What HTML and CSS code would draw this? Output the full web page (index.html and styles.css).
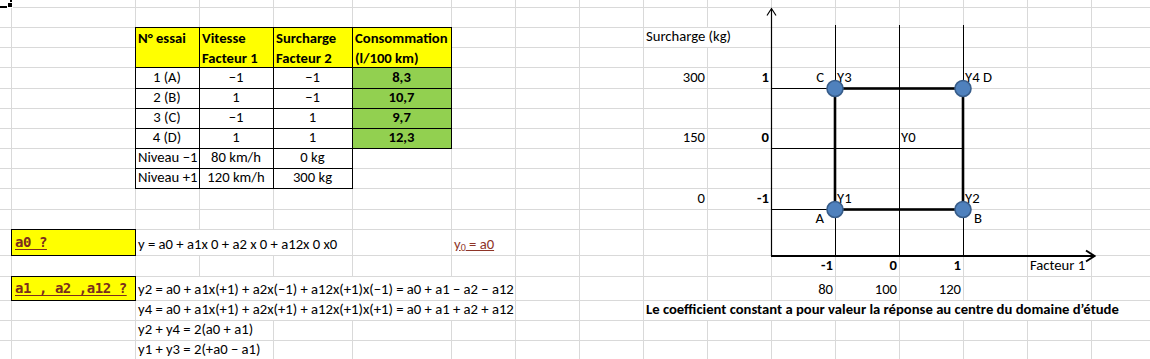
FILE: index.html
```html
<!DOCTYPE html>
<html lang="fr">
<head>
<meta charset="utf-8">
<title>Plan factoriel 2²</title>
<link rel="stylesheet" href="styles.css">
</head>
<body>
<div class="sheet">
  <div class="layer vlines">
    <span></span><span></span><span></span><span></span><span></span><span></span><span></span><span></span><span></span><span></span><span></span><span></span><span></span><span></span><span></span><span></span><span></span>
  </div>
  <div class="layer hlines">
    <span></span><span></span><span></span><span></span><span></span><span></span><span></span><span></span><span></span><span></span><span></span><span></span><span></span><span></span><span></span><span></span><span></span><span></span>
  </div>

  <div class="layer cells">
    <div class="cell cA r1 sel"><span class="handle"></span></div>

    <div class="cell cC r3 h2 bx yel hd">N° essai<br>&nbsp;</div>
    <div class="cell cD r3 h2 bx yel hd">Vitesse<br>Facteur 1</div>
    <div class="cell cE r3 h2 bx yel hd">Surcharge<br>Facteur 2</div>
    <div class="cell cF r3 h2 bx yel hd">Consommation<br>(l/100 km)</div>
    <div class="cell cJ r3 w2 ov">Surcharge (kg)</div>

    <div class="cell cC r5 bx ctr">1 (A)</div>
    <div class="cell cD r5 bx ctr">−1</div>
    <div class="cell cE r5 bx ctr">−1</div>
    <div class="cell cF r5 bx grn ctr">8,3</div>
    <div class="cell cJ r5 rt">300</div>
    <div class="cell cK r5 rt b">1</div>
    <div class="cell cL r5 rt pr12">C</div>
    <div class="cell cM r5 pl0">Y3</div>
    <div class="cell cO r5 pl0">Y4 D</div>

    <div class="cell cC r6 bx ctr">2 (B)</div>
    <div class="cell cD r6 bx ctr">1</div>
    <div class="cell cE r6 bx ctr">−1</div>
    <div class="cell cF r6 bx grn ctr">10,7</div>

    <div class="cell cC r7 bx ctr">3 (C)</div>
    <div class="cell cD r7 bx ctr">−1</div>
    <div class="cell cE r7 bx ctr">1</div>
    <div class="cell cF r7 bx grn ctr">9,7</div>

    <div class="cell cC r8 bx ctr">4 (D)</div>
    <div class="cell cD r8 bx ctr">1</div>
    <div class="cell cE r8 bx ctr">1</div>
    <div class="cell cF r8 bx grn ctr">12,3</div>
    <div class="cell cJ r8 rt">150</div>
    <div class="cell cK r8 rt b">0</div>
    <div class="cell cN r8 pl0">Y0</div>

    <div class="cell cC r9 bx">Niveau −1</div>
    <div class="cell cD r9 bx ctr">80 km/h</div>
    <div class="cell cE r9 bx ctr">0 kg</div>

    <div class="cell cC r10 bx">Niveau +1</div>
    <div class="cell cD r10 bx ctr">120 km/h</div>
    <div class="cell cE r10 bx ctr">300 kg</div>

    <div class="cell cJ r11 rt">0</div>
    <div class="cell cK r11 rt b">-1</div>
    <div class="cell cM r11 pl0">Y1</div>
    <div class="cell cO r11 pl0">Y2</div>

    <div class="cell cL r12 rt pr12">A</div>
    <div class="cell cO r12 pl10">B</div>

    <div class="cell cB r13 bx yel ask">a0 ?</div>
    <div class="cell cC r13 w3 ov">y = a0 + a1x 0 + a2 x 0 + a12x 0 x0</div>
    <div class="cell cG r13 res"><span>y<sub>0</sub> = a0</span></div>

    <div class="cell cL r14 rt b">-1</div>
    <div class="cell cM r14 rt b">0</div>
    <div class="cell cN r14 rt b">1</div>
    <div class="cell cP r14">Facteur 1</div>

    <div class="cell cB r15 bx yel ask">a1 , a2 ,a12 ?</div>
    <div class="cell cC r15 w5 ov">y2 = a0 + a1x(+1) + a2x(−1) + a12x(+1)x(−1) = a0 + a1 − a2 − a12</div>
    <div class="cell cL r15 rt">80</div>
    <div class="cell cM r15 rt">100</div>
    <div class="cell cN r15 rt">120</div>

    <div class="cell cC r16 w5 ov">y4 = a0 + a1x(+1) + a2x(+1) + a12x(+1)x(+1) = a0 + a1 + a2 + a12</div>
    <div class="cell cJ r16 w8 ov b">Le coefficient constant a pour valeur la réponse au centre du domaine d’étude</div>

    <div class="cell cC r17 w2 ov">y2 + y4 = 2(a0 + a1)</div>
    <div class="cell cC r18 w2 ov">y1 + y3 = 2(+a0 − a1)</div>
  </div>

  <svg class="chart" width="1156" height="361" viewBox="0 0 1156 361" aria-hidden="true">
    <g fill="none" stroke="#000">
      <path d="M771.5 256 V9 M767 15.5 L771.5 8.5 L776 15.5" stroke-width="1.2"/>
      <path d="M771 256 H1094 M1086 250.5 L1094.5 256 L1086 261.5" stroke-width="2"/>
      <path d="M771 88.5 H835 M771 148.5 H963 M771 209.5 H835 M835.5 25 V88 M835.5 210 V255 M899.5 25 V255 M963.5 25 V88 M963.5 210 V255" stroke-width="1"/>
      <rect x="835" y="88.5" width="128" height="121" stroke-width="2.6"/>
    </g>
    <g fill="#4f81bd" stroke="#385d8a" stroke-width="1.6">
      <circle cx="835" cy="88.5" r="8"/>
      <circle cx="963" cy="88.5" r="8"/>
      <circle cx="835" cy="209.5" r="8"/>
      <circle cx="963" cy="209.5" r="8"/>
    </g>
  </svg>
</div>
</body>
</html>
```

FILE: styles.css
```css
:root {
  --cols: 12px 124px 64px 74px 79px 99px repeat(11, 64px);
  --rows: 8px 20px 20px 20px 21px 20px 20px 20px 20px 20px 21px 20px 26px 21px 24px 20px 20px 20px;
  --grid: #d9d9d9;
}

* { box-sizing: border-box; }

html, body {
  margin: 0;
  background: #fff;
}

body {
  font-family: Carlito, Lato, "Liberation Sans", sans-serif;
  font-size: 14.67px;
  color: #000;
  overflow: hidden;
}

.sheet {
  position: relative;
  display: grid;
  grid-template-columns: var(--cols);
  grid-template-rows: var(--rows);
  width: 1150px;
  height: 359px;
  overflow: hidden;
}

.layer {
  grid-area: 1 / 1 / -1 / -1;
  display: grid;
  grid-template-columns: var(--cols);
  grid-template-rows: var(--rows);
}

.vlines span {
  grid-row: 1 / -1;
  border-right: 1px solid var(--grid);
}

.hlines span {
  grid-column: 1 / -1;
  border-bottom: 1px solid var(--grid);
}

/* cells */
.cell {
  display: flex;
  align-items: flex-end;
  padding: 0 3px 3px 2px;
  line-height: 18px;
  white-space: nowrap;
  min-width: 0;
}

.ctr { justify-content: center; }
.rt { justify-content: flex-end; }
.b { font-weight: bold; }
.pr12 { padding-right: 12px; }
.pl0 { padding-left: 1px; }
.pl10 { padding-left: 10px; }

.ov {
  background: #fff;
  border-right: 1px solid var(--grid);
  border-bottom: 1px solid var(--grid);
  padding-bottom: 2px;
}

.bx {
  border-right: 1px solid #000;
  border-bottom: 1px solid #000;
  box-shadow: -1px 0 0 #000, 0 -1px 0 #000, -1px -1px 0 #000;
  padding-bottom: 2px;
}

.yel { background: #ffff00; }
.grn { background: #92d050; font-weight: bold; }

.hd {
  display: block;
  font-weight: bold;
  line-height: 20px;
  padding: 0 2px;
}

.ask {
  align-items: center;
  padding: 0 0 2px 3px;
  font-family: "DejaVu Sans Mono", "Liberation Mono", monospace;
  font-weight: bold;
  font-size: 14px;
  letter-spacing: -0.45px;
  color: #7a2d1e;
  text-decoration: underline;
  text-underline-offset: 2px;
  white-space: pre;
}

.res span {
  color: #8e3427;
  text-decoration: underline;
}

.res sub {
  font-size: 10px;
  vertical-align: -2px;
  line-height: 0;
}

/* selected cell */
.sel {
  position: relative;
  padding: 0;
  border-right: 2px solid #000;
  border-bottom: 2px solid #000;
}

.handle {
  position: absolute;
  right: -3px;
  bottom: -2px;
  width: 6px;
  height: 6px;
  background: #000;
  border: 1px solid #fff;
}

/* columns */
.cA { grid-column-start: 1; }
.cB { grid-column-start: 2; }
.cC { grid-column-start: 3; }
.cD { grid-column-start: 4; }
.cE { grid-column-start: 5; }
.cF { grid-column-start: 6; }
.cG { grid-column-start: 7; }
.cH { grid-column-start: 8; }
.cI { grid-column-start: 9; }
.cJ { grid-column-start: 10; }
.cK { grid-column-start: 11; }
.cL { grid-column-start: 12; }
.cM { grid-column-start: 13; }
.cN { grid-column-start: 14; }
.cO { grid-column-start: 15; }
.cP { grid-column-start: 16; }
.cQ { grid-column-start: 17; }

.w2 { grid-column-end: span 2; }
.w3 { grid-column-end: span 3; }
.w5 { grid-column-end: span 5; }
.w8 { grid-column-end: span 8; }

/* rows */
.r1 { grid-row-start: 1; }
.r3 { grid-row-start: 3; }
.r5 { grid-row-start: 5; }
.r6 { grid-row-start: 6; }
.r7 { grid-row-start: 7; }
.r8 { grid-row-start: 8; }
.r9 { grid-row-start: 9; }
.r10 { grid-row-start: 10; }
.r11 { grid-row-start: 11; }
.r12 { grid-row-start: 12; }
.r13 { grid-row-start: 13; }
.r14 { grid-row-start: 14; }
.r15 { grid-row-start: 15; }
.r16 { grid-row-start: 16; }
.r17 { grid-row-start: 17; }
.r18 { grid-row-start: 18; }

.h2 { grid-row-end: span 2; }

.chart {
  position: absolute;
  left: 0;
  top: 0;
  pointer-events: none;
}
```
